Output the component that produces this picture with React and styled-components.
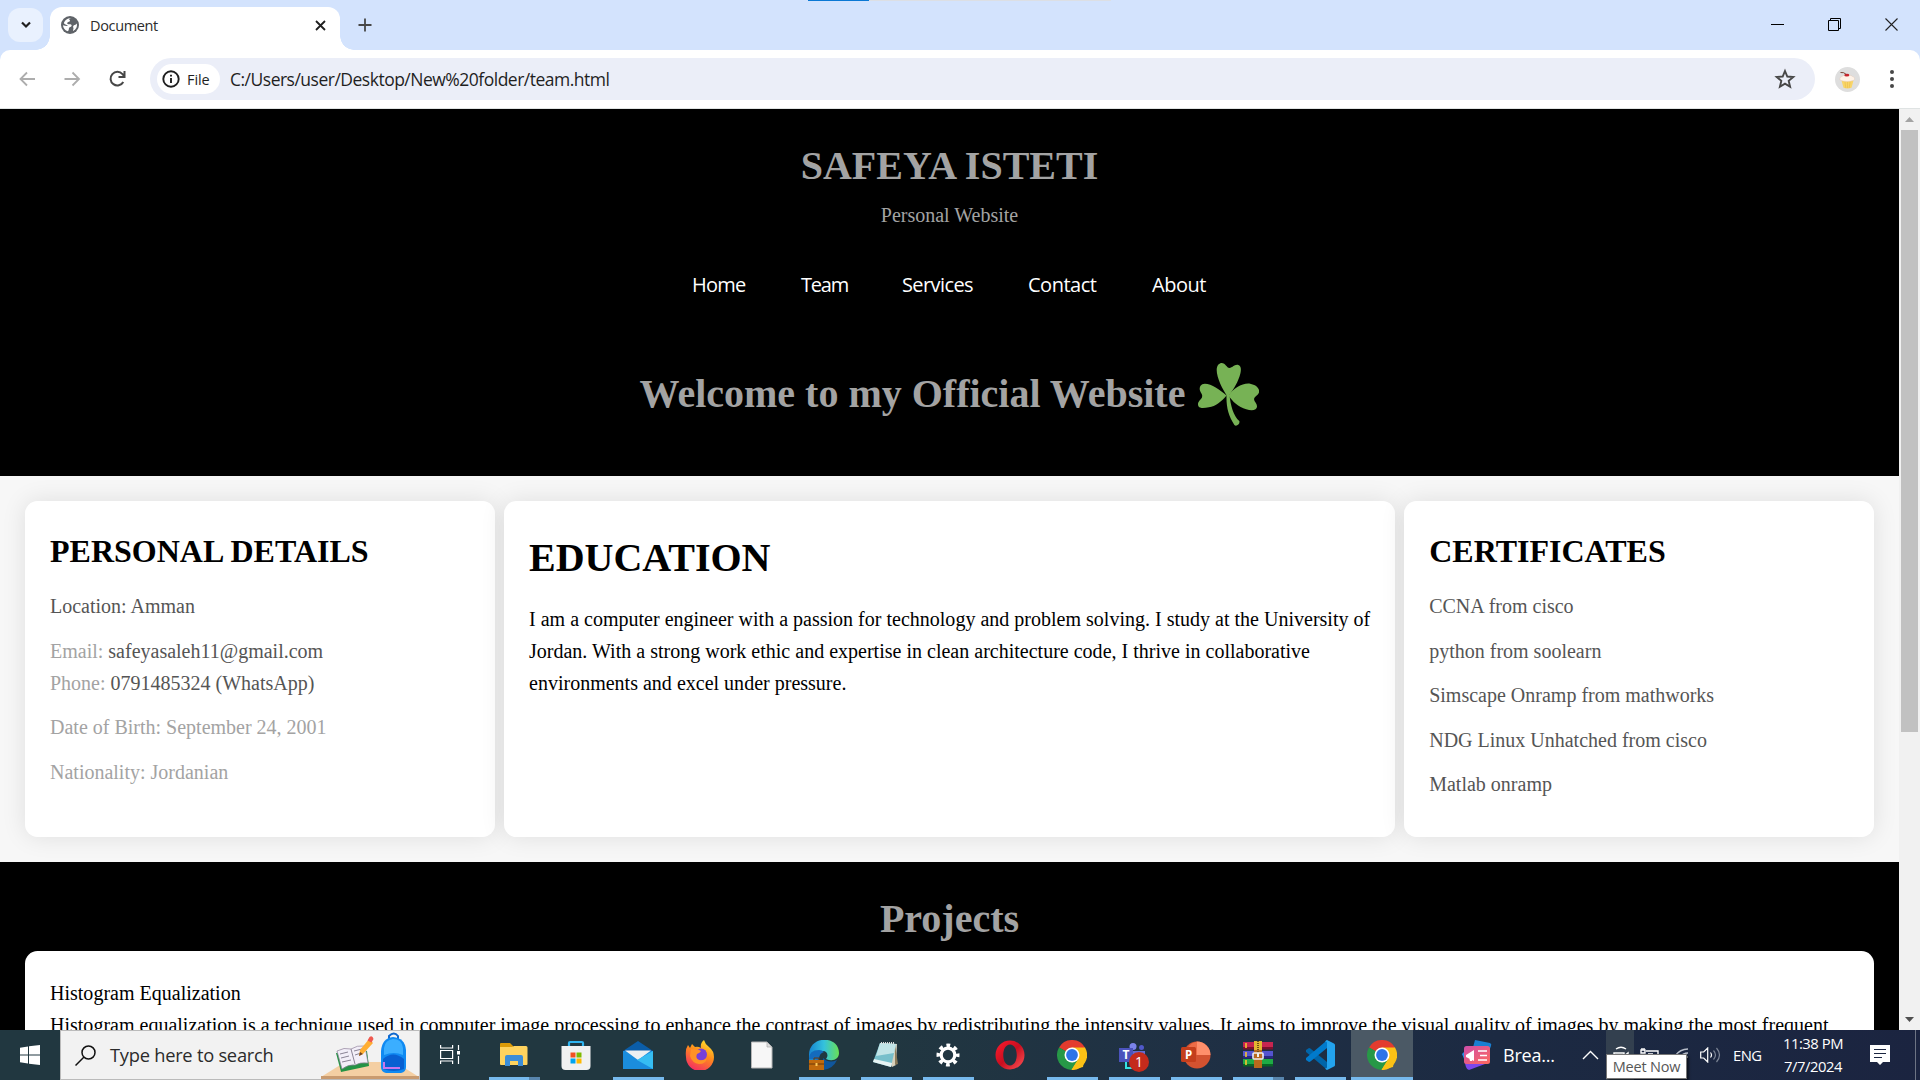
import React from 'react';
import styled, { createGlobalStyle } from 'styled-components';

const Global = createGlobalStyle`
  * { box-sizing: border-box; }
  html, body { margin: 0; padding: 0; overflow: hidden; background: #000; }
  svg { display: block; flex: none; }
`;

const ui = `"Open Sans", "Noto Sans", sans-serif`;
const serif = `"Liberation Serif", "Times New Roman", serif`;

const Screen = styled.div`
  width: 1920px;
  height: 1080px;
  display: flex;
  flex-direction: column;
  overflow: hidden;
  position: relative;
  font-family: ${ui};
`;

/* ---------- browser chrome ---------- */
const LoadStrip = styled.div`
  position: absolute;
  top: 0;
  left: 808px;
  width: 303px;
  height: 1px;
  background: linear-gradient(90deg, #0a78d4 61px, #dcdfe4 61px);
`;
const TabStrip = styled.div`
  height: 50px;
  flex: none;
  background: #d3e3fd;
  display: flex;
  align-items: flex-start;
  padding: 7px 0 0 8px;
`;
const TabSearch = styled.div`
  width: 35px;
  height: 34px;
  margin: 1px 7px 0 0;
  border-radius: 12px;
  background: #e9f1fe;
  display: flex;
  align-items: center;
  justify-content: center;
`;
const Tab = styled.div`
  position: relative;
  width: 290px;
  height: 43px;
  background: #fff;
  border-radius: 12px 12px 0 0;
  display: flex;
  align-items: center;
  padding: 0 13px 7px 11px;
  &::before, &::after {
    content: '';
    position: absolute;
    bottom: 0;
    width: 14px;
    height: 14px;
  }
  &::before { left: -14px; background: radial-gradient(circle at 0 0, transparent 13.5px, #fff 14px); }
  &::after { right: -14px; background: radial-gradient(circle at 100% 0, transparent 13.5px, #fff 14px); }
`;
const TabTitle = styled.span`
  flex: 1;
  margin-left: 11px;
  font-size: 14.5px;
  letter-spacing: -0.35px;
  color: #2c2c2c;
`;
const NewTab = styled.div`
  margin: 11px 0 0 18px;
`;
const WindowButtons = styled.div`
  margin-left: auto;
  display: flex;
  padding: 11px 22px 0 0;
  gap: 44px;
`;
const Toolbar = styled.div`
  height: 59px;
  background: #fff;
  border-bottom: 1px solid #dfe3e3;
  border-radius: 10px 10px 0 0;
  display: flex;
  align-items: center;
  padding: 0 17px;
`;
const ToolbarBack = styled.div`
  background: #d3e3fd;
  flex: none;
`;
const NavIcons = styled.div`
  display: flex;
  gap: 25px;
  width: 133px;
`;
const Omnibox = styled.div`
  width: 1665px;
  height: 42px;
  border-radius: 21px;
  background: #ebeef8;
  display: flex;
  align-items: center;
  padding: 0 19px 0 7px;
`;
const FileChip = styled.div`
  width: 63px;
  height: 30px;
  border-radius: 15px;
  background: #fff;
  display: flex;
  align-items: center;
  gap: 7px;
  padding-left: 5px;
  font-size: 14.5px;
  color: #1f1f1f;
  letter-spacing: -0.1px;
`;
const Url = styled.span`
  flex: 1;
  margin-left: 10px;
  font-size: 17.5px;
  letter-spacing: -0.5px;
  color: #1f1f1f;
`;
const Avatar = styled.div`
  width: 25px;
  height: 25px;
  border-radius: 50%;
  background: #dedede;
  margin: 0 30px 0 20px;
`;

/* ---------- web page ---------- */
const Viewport = styled.div`
  height: 921px;
  flex: none;
  display: flex;
`;
const Page = styled.div`
  width: 1899px;
  height: 921px;
  overflow: hidden;
  background: #f7f7f7;
  font: 20px/32px ${serif};
  color: #000;
`;
const Header = styled.header`
  height: 367px;
  background: #000;
  color: #a3a3a3;
  padding-top: 25px;
  display: flex;
  flex-direction: column;
  align-items: center;
`;
const Heading = styled.h1`
  margin: 0;
  font-size: ${(p) => p.$size || 40}px;
  line-height: 1.6;
  font-weight: 700;
`;
const Tagline = styled.p`
  margin: 1px 0 38px;
`;
const Menu = styled.nav`
  display: flex;
  gap: 55px;
  margin-bottom: 61px;
`;
const MenuLink = styled.a`
  width: ${(p) => p.$w}px;
  font: 20px/32px ${ui};
  letter-spacing: ${(p) => p.$track}px;
  white-space: nowrap;
  color: #fff;
`;
const Welcome = styled.div`
  display: flex;
  align-items: center;
  gap: 13px;
`;
const Main = styled.main`
  height: 386px;
  padding: 25px;
  display: flex;
  gap: 9px;
`;
const Card = styled.section`
  flex: ${(p) => p.$w ? `0 0 ${p.$w}px` : '1'};
  background: #fff;
  border-radius: 12.5px;
  padding: 25px;
  box-shadow: 0 0 25px rgba(0, 0, 0, 0.1);
  h1 { margin-bottom: 13.3px; }
`;
const Line = styled.p`
  margin: 0 0 ${(p) => (p.$tight ? 0 : 12.5)}px;
  color: ${(p) => (p.$muted ? '#a3a3a3' : '#555')};
  white-space: nowrap;
`;
const Value = styled.span`
  color: #555;
`;
const Body = styled.p`
  margin: 0;
  white-space: pre;
  letter-spacing: 0.008px;
`;
const Projects = styled.section`
  background: #000;
  padding: 25px 25px 0;
  h1 { text-align: center; color: #a3a3a3; }
`;
const ProjectCard = styled.div`
  background: #fff;
  height: 200px;
  border-radius: 12.5px;
  padding: 26px 25px;
`;
const Scrollbar = styled.div`
  width: 21px;
  background: #f1f1f1;
  display: flex;
  flex-direction: column;
  align-items: center;
`;
const ScrollArrow = styled.div`
  height: 21px;
  display: flex;
  align-items: center;
  margin-top: ${(p) => (p.$end ? 'auto' : 0)};
`;
const Thumb = styled.div`
  width: 17px;
  height: 602px;
  background: #c1c1c1;
`;

/* ---------- taskbar ---------- */
const Taskbar = styled.div`
  height: 50px;
  flex: none;
  display: flex;
  background: linear-gradient(90deg, #213740 0, #213740 45%, #1f3044 62%, #1c2a42 78%, #1b2440 100%);
  color: #fff;
  > * { flex: none; }
`;
const Start = styled.div`
  width: 60px;
  padding: 15px 0 0 20px;
`;
const Search = styled.div`
  width: 360px;
  height: 50px;
  background: #f2f2f2;
  border: 1px solid #bbb;
  display: flex;
  align-items: center;
  padding-left: 14px;
  color: #2b2b2b;
  font-size: 18.3px;
  white-space: nowrap;
`;
const SearchLabel = styled.span`
  margin-left: 14px;
  width: 211px;
  padding-bottom: 2px;
  letter-spacing: -0.25px;
`;
const TaskView = styled.div`
  width: 63px;
  padding: 15px 0 0 20px;
`;
const AppButton = styled.div`
  width: 62px;
  height: 50px;
  display: flex;
  flex-direction: column;
  align-items: center;
  justify-content: space-between;
  padding-top: 10px;
  background: ${(p) => (p.$active ? '#4b5965' : 'transparent')};
`;
const Indicator = styled.div`
  height: 3px;
  width: ${(p) => (p.$active ? 62 : 51)}px;
  background: ${(p) => p.$stack ? 'linear-gradient(90deg, #76b9ed 40px, #5885ad 40px)' : p.$on ? '#76b9ed' : 'transparent'};
`;
const News = styled.div`
  display: flex;
  align-items: center;
  gap: 11px;
  margin-left: 49px;
  width: 107px;
  font-size: 18px;
  letter-spacing: -0.2px;
`;
const Tray = styled.div`
  display: flex;
  align-items: center;
  position: relative;
  width: 153px;
  margin-left: 11px;
`;
const TrayCell = styled.div`
  flex: none;
  width: ${(p) => p.$w}px;
  height: 50px;
  display: flex;
  align-items: center;
  padding-left: ${(p) => p.$pad}px;
  background: ${(p) => (p.$hover ? '#33404f' : 'transparent')};
`;
const Tooltip = styled.div`
  position: absolute;
  left: 26px;
  top: 24px;
  width: 81px;
  height: 25px;
  background: #fff;
  border: 1px solid #767676;
  color: #575757;
  font-size: 14.5px;
  line-height: 23px;
  letter-spacing: -0.2px;
  text-align: center;
  white-space: nowrap;
  box-shadow: 2px 2px 2px rgba(0, 0, 0, 0.5);
`;
const Language = styled.div`
  width: 30px;
  font-size: 14.8px;
  line-height: 50px;
  letter-spacing: -0.5px;
`;
const Clock = styled.div`
  width: 100px;
  text-align: center;
  font-size: 14.8px;
  line-height: 23px;
  padding-top: 2px;
  letter-spacing: -0.45px;
  white-space: nowrap;
`;
const Notice = styled.div`
  width: 47px;
  margin-left: 6px;
  padding: 15px 0 0 1px;
  border-right: 1px solid #6d7484;
`;

/* ---------- drawings ---------- */
const Stroke = ({ w = 20, h = w, d, color = '#474747', sw = 2 }) => (
  <svg width={w} height={h} viewBox={`0 0 ${w} ${h}`} fill="none" stroke={color} strokeWidth={sw}><path d={d} /></svg>
);

const Globe = () => (
  <svg width="18" height="18" viewBox="0 0 18 18">
    <circle cx="9" cy="9" r="9" fill="#5f6368" />
    <path d="M10.500 2C8 2.300 7.600 3.800 9 4.500c.5 1.500-2.600 1-2.800 2.700-.1 1.300 1.800.9 3 1 1.500.2 2 1.600.9 2.400-1 .7-2 .6-2.200 2-.1 1-.2 2.600-1.300 2.600C3.800 14 2 11.800 2 9.200c1.600.3 3 .9 4.800.7-.3-1-2.800-1.200-3.900-2.700C3.500 5 6 2 10.500 2z" fill="#fff" />
    <path d="M15.800 7.500c.7 3.200-.9 6.200-3.600 7.400-.6-.8.400-1.600.300-2.600-.1-.8-.7-1.500-.2-2.400.7-1.100 2.300-.8 3.500-2.400z" fill="#fff" />
  </svg>
);

const Cupcake = () => (
  <svg width="25" height="25" viewBox="0 0 25 25">
    <path d="M6.500 13.500h12l-2 7.300q-4 1.500-8 0z" fill="#f8d568" />
    <path d="M10 15l.8 6M12.500 15v6M15 15l-.8 6" stroke="#eec152" strokeWidth=".8" />
    <path d="M5 13c-.6-2 .8-3.400 2-3.500 1.500-2 8.500-2.300 10.500 0 2 .2 2.800 2.800 1.200 3.800-3.500 1.600-10 1.600-13.700-.3z" fill="#fff3e8" stroke="#e3c9b8" strokeWidth=".5" />
    <ellipse cx="11.800" cy="8.200" rx="2.500" ry="1.400" fill="#c8232c" />
    <path d="M11 7.300Q9 5 5.500 5.500" stroke="#7b4a39" fill="none" />
  </svg>
);

const Shamrock = () => (
  <svg width="61" height="63" viewBox="0 0 62 64" fill="#77b255">
    <path d="M30 34C25 27 19 15 19 7c0-5 3-7 5-7 4 0 5 5 8 5s5-4 9-3c3 1 3 5 2 9-2 8-7 16-10 20z" />
    <path d="M29 33C22 27 14 21 7 21c-4 0-6 3-5 7 1 3 3 4 2 7-1 2-4 4-4 7 0 5 6 4 11 3 7-1 13-6 18-12z" />
    <path d="M31 33c5-7 14-13 22-12 6 1 10 5 9 9-1 3-5 4-5 7 0 2 3 4 3 7 0 4-5 5-11 3-8-2-14-8-18-14z" />
    <path d="M29 32c-.5 13 2 22 8 31 2 2 6-1 5-4-6-5-9-16-10-27z" />
  </svg>
);

const Desk = () => (
  <svg width="98" height="48" viewBox="0 0 98 48">
    <path d="M0 46L24 31h50l24 15z" fill="#f4cfa3" />
    <path d="M0 45h98v4H0z" fill="#c99b70" />
    <path d="M15 22l5 19 28-6-2-15z" fill="#249345" />
    <path d="M16 20q7-4 14-2 6-4 14-3l3 17q-8-1-13 2-6-1-13 4z" fill="#f2eef8" stroke="#8f8199" strokeWidth=".7" />
    <path d="M30 18l4 15M19 23l8-2M20 27l8-2M21 31l9-2M33 20l8-2M34 24l6-2" stroke="#8b8496" strokeWidth="1" />
    <path d="M38 25l1-6L48 8l4 4-10 11z" fill="#ffae33" />
    <path d="M46.500 9.500l2-3.500q3-2 4 2l-2 3.500z" fill="#ef594f" />
    <path d="M38 25l1-4 3 2z" fill="#704426" />
    <path d="M68 8V5q5-5 9 0v3" fill="none" stroke="#1068ce" strokeWidth="2" />
    <path d="M60 20Q61 7 72 6q12 1 13 13v17q0 5-5 6H65q-5-1-5-6z" fill="#108af2" />
    <path d="M63 17Q64 9 72 8q9 0 10 9v7q-9-4-19 0z" fill="#3baeff" />
    <path d="M62 28q10-9 21 0v10q-10 4-21 0z" fill="#0860d2" />
    <path d="M63 31v6h16" fill="none" stroke="#c777ec" strokeWidth="2" />
  </svg>
);

const icon = (children) => <svg width="30" height="30" viewBox="0 0 30 30">{children}</svg>;

const Explorer = () => icon(<>
  <path d="M1 4q0-1 1-1h9l3 3v5H1z" fill="#dc9b08" />
  <path d="M1 7h12l2-1h12q1.500 0 1.500 1.500V24q0 1-1 1H2q-1 0-1-1z" fill="#ffd35e" />
  <path d="M6 26V17q0-2 2-2h14q2 0 2 2v9h-5v-5h-8v5z" fill="#3c8dd7" />
</>);
const Store = () => icon(<>
  <path d="M8 7V3q0-1 1-1h12q1 0 1 1v4" fill="none" stroke="#2fb4f0" strokeWidth="2.200" />
  <path d="M.500 6h29v20q0 4-4 4h-21q-4 0-4-4z" fill="#f1f1f1" />
  <path d="M9.500 12.500h5v5h-5z" fill="#f25022" /><path d="M15.500 12.500h5v5h-5z" fill="#7fba00" />
  <path d="M9.500 18.500h5v5h-5z" fill="#00a4ef" /><path d="M15.500 18.500h5v5h-5z" fill="#ffb900" />
</>);
const Mail = () => icon(<>
  <path d="M0 11L15 1l15 10z" fill="#0b5da8" />
  <path d="M0 11h30v18H0z" fill="#1b8ddd" />
  <path d="M2 10.500h26L15 20z" fill="#edf0f2" />
  <path d="M30 11v18L14 20z" fill="#36bdf2" />
</>);
const Firefox = () => icon(<>
  <defs><linearGradient id="ff" x1=".8" y1="0" x2=".3" y2="1"><stop stopColor="#ffe52c" /><stop offset=".45" stopColor="#ff8b1c" /><stop offset="1" stopColor="#f42b65" /></linearGradient></defs>
  <path d="M3 5l2 3 2-4 3 3q3-1 6 1-1-5 3-8 1 4 5 7 5 4 5 10A14 14 0 0 1 1 17Q0 9 3 5z" fill="url(#ff)" />
  <circle cx="16" cy="14.500" r="6" fill="#7740d8" />
  <path d="M6 9q6-1 10 2-1 2-4 3-2 4 2 6 5 1 8-2-1 6-8 6-7-1-9-8z" fill="#ff9226" />
</>);
const BlankFile = () => icon(<>
  <path d="M4.500 2H20l5 5v21H4.500z" fill="#f7f7f7" stroke="#b5b5b5" /><path d="M20 2v5h5z" fill="#ddd" stroke="#aaa" strokeWidth=".7" />
</>);
const Edge = () => icon(<>
  <defs><linearGradient id="ed" x1="0" y1=".3" x2="1" y2=".3"><stop stopColor="#1685d1" /><stop offset=".5" stopColor="#34c2dd" /><stop offset="1" stopColor="#69df55" /></linearGradient></defs>
  <path d="M0 15C0-5 30-5 30 13c0 6-6 9-13 6 3-4 1-8-3-8-5 0-6 5-5 10H0z" fill="url(#ed)" />
  <path d="M0 19q0-9 10-9 3 0 5 2-5 1-5 8z" fill="#146bbd" />
  <path d="M14 18q6 6 14 2-4 9-14 10z" fill="#10569c" />
  <path d="M0 20h15v10H0z" fill="#c16a0d" /><path d="M5 20v-2h5v2M0 24h15" fill="none" stroke="#6b3a0d" /><path d="M6.500 23h2v3h-2z" fill="#ffc857" />
</>);
const Notepad = () => icon(<>
  <path d="M10 3l16 1-1 21-4 2z" fill="#d6d0bc" /><path d="M24 5l3 19-3 1z" fill="#8a7b5a" />
  <path d="M9 3l16 1-5 23L2 22z" fill="#77bfcb" /><path d="M9 3l16 1-2 9-18 3z" fill="#c1e4e7" /><path d="M2 22l18 5 1-4L3 19z" fill="#e7f3f3" />
  <path d="M10 3h14" stroke="#ddd" strokeWidth="2" strokeDasharray="1 1" />
</>);
const Gear = () => icon(<>
  <circle cx="15" cy="15" r="9.500" fill="none" stroke="#fff" strokeWidth="4" strokeDasharray="3.700 3.761" strokeDashoffset="1.850" />
  <circle cx="15" cy="15" r="6.800" fill="none" stroke="#fff" strokeWidth="3.200" />
</>);
const Opera = () => icon(<>
  <defs><linearGradient id="op" x1="0" y1="0" x2="1" y2="1"><stop stopColor="#ff1b2d" /><stop offset=".5" stopColor="#c80f20" /><stop offset="1" stopColor="#ff5557" /></linearGradient></defs>
  <path fillRule="evenodd" d="M15 .500A14.500 14.500 0 1 1 15 29.500 14.500 14.500 0 1 1 15 .500zm0 4c-9 0-9 21 0 21s9-21 0-21z" fill="url(#op)" />
</>);
const Chrome = () => icon(<>
  <path d="M15 15L2 7.500A15 15 0 0 1 28 7.500z" fill="#e33b2e" />
  <path d="M15 15L28 7.500A15 15 0 0 1 14.500 30z" fill="#fbc116" />
  <path d="M15 15l-.5 15A15 15 0 0 1 2 7.500z" fill="#279847" />
  <path d="M15 7.500h13L22 20z" fill="#fbc116" /><path d="M2 7.500L8.500 19 15 15z" fill="#279847" /><path d="M8.500 18.700L15 22.500l6.500-3.700L14.500 30z" fill="#279847" /><path d="M21.500 18.700L14.500 30 26 27l2-12z" fill="#fbc116" />
  <circle cx="15" cy="15" r="7.500" fill="#fff" /><circle cx="15" cy="15" r="5.900" fill="#2d74e8" />
</>);
const IconText = styled.text`
  font-family: ${ui};
  font-weight: ${(p) => p.$weight || 700};
  fill: #fff;
  text-anchor: middle;
`;
const Teams = () => (
  <svg width="30" height="32" viewBox="0 0 30 32" overflow="visible">
    <circle cx="14" cy="6.500" r="3.500" fill="#7b83eb" /><circle cx="22.500" cy="7.500" r="2.500" fill="#5059c9" />
    <path d="M8 11h18v10q-3 8-14 5z" fill="#636bd2" />
    <path d="M7 22v6h6" fill="none" stroke="#35e3e3" strokeWidth="2" />
    <path d="M0 8h14v14H0z" fill="#4b53bc" /><IconText x="7" y="19" fontSize="12">T</IconText>
    <circle cx="20" cy="22" r="10" fill="#c42b1c" /><IconText x="20" y="27" fontSize="14" $weight={400}>1</IconText>
  </svg>
);
const PowerPoint = () => icon(<>
  <circle cx="16" cy="15" r="13.500" fill="#d35230" /><path d="M16 1.500A13.500 13.500 0 0 1 29.500 15H16z" fill="#ff8f6b" /><path d="M16 1.500V15H5Q5 4 16 1.500z" fill="#ed6c47" />
  <rect x="0" y="7" width="15" height="15" rx="1.500" fill="#c43e1c" /><IconText x="7.500" y="18.800" fontSize="11.500">P</IconText>
</>);
const WinRar = () => icon(<>
  {[['#c62550', '#7a102d', 2], ['#5454d0', '#292982', 11], ['#1faa45', '#086326', 19]].map(([a, b, y]) => (
    <g key={y}><path d={`M0 ${y}h30v7H0z`} fill={a} /><path d={`M0 ${y + 5}h30v2.500H0z`} fill={b} /><path d={`M3 ${y + 1}v5`} stroke="#f6c531" strokeWidth="1.600" /></g>
  ))}
  <path d="M11 1h8v27h-8z" fill="#b9691d" /><path d="M11 1h8v9h-8z" fill="#e2b731" /><path d="M15 1v13" stroke="#715018" strokeDasharray="1 1" strokeWidth="2" />
  <rect x="10" y="13" width="10" height="6" rx="1" fill="none" stroke="#eee" strokeWidth="1.600" /><path d="M15 13v4" stroke="#eee" strokeWidth="2" />
</>);
const VsCode = () => icon(<>
  <path d="M1 10l3-2q1 0 2 1l16 13v7q-1 0-2-1L1 12z" fill="#0065a9" />
  <path d="M1 20l3 2q1 0 2-1L22 8V1q-1 0-2 1L1 18z" fill="#007acc" />
  <path d="M22 0l7 3.500q1 .500 1 1.500v20q0 1-1 1.500L22 30q-1 0-2-2 2 1 2-1V3q0-2-2-1 1-2 2-2z" fill="#23a3ee" />
</>);
const NewsIcon = () => icon(<>
  <path d="M13 0l15 3q2 1 1 3l-5 13-14-8z" fill="#197fd2" />
  <path d="M2 20h23l-2 4-16 6q-2 0-3-3z" fill="#7b47ed" /><path d="M0 14l3-3v10z" fill="#2391ed" />
  <defs><linearGradient id="nw" x1="0" y1="0" x2="1" y2="1"><stop stopColor="#ce4eaa" /><stop offset="1" stopColor="#ff695c" /></linearGradient></defs>
  <rect x="2" y="6" width="26" height="18" rx="2.500" fill="url(#nw)" />
  <path d="M4 15l8-5v11l-8-4zM7 17h3v4H8z" fill="#fff" /><path d="M16 11h9M18 15.500h7M16 20h9" stroke="#fff" strokeWidth="1.500" />
</>);

const apps = [
  { Icon: Explorer, on: true, stack: true }, { Icon: Store }, { Icon: Mail, on: true }, { Icon: Firefox },
  { Icon: BlankFile }, { Icon: Edge, on: true }, { Icon: Notepad, on: true }, { Icon: Gear, on: true },
  { Icon: Opera }, { Icon: Chrome, on: true }, { Icon: Teams, on: true }, { Icon: PowerPoint, on: true },
  { Icon: WinRar, on: true, stack: true }, { Icon: VsCode, on: true }, { Icon: Chrome, on: true, active: true },
];
const menu = [['Home', 54, -0.8], ['Team', 46, -1.2], ['Services', 71, -0.6], ['Contact', 69, -0.5], ['About', 55, -0.5]];
const certificates = ['CCNA from cisco', 'python from soolearn', 'Simscape Onramp from mathworks', 'NDG Linux Unhatched from cisco', 'Matlab onramp'];

export default function App() {
  return (
    <Screen>
      <Global />
      <TabStrip>
        <TabSearch><Stroke w={12} h={8} d="M2 1.500l4 4 4-4" color="#1f1f1f" sw={2.200} /></TabSearch>
        <Tab>
          <Globe />
          <TabTitle>Document</TabTitle>
          <Stroke w={13} d="M2 2l9 9M11 2l-9 9" color="#1f1f1f" sw={1.800} />
        </Tab>
        <NewTab><Stroke w={14} d="M7 .500v13M.500 7h13" sw={1.800} /></NewTab>
        <WindowButtons>
          <Stroke w={13} d="M0 6.500h13" color="#000" sw={1} />
          <Stroke w={13} d="M.500 2.500h10v10H.500zM2.500 2.500v-2h10v10h-2" color="#000" sw={1} />
          <Stroke w={13} d="M.500.500l12 12M12.500.500l-12 12" color="#222" sw={1.100} />
        </WindowButtons>
      </TabStrip>
      <LoadStrip />
      <ToolbarBack>
        <Toolbar>
          <NavIcons>
            <Stroke w={20} d="M18 10H4M10 3.500L3.500 10l6.500 6.500" color="#adadad" sw={1.800} />
            <Stroke w={20} d="M2.500 10h14M10.500 3.500l6.500 6.500-6.500 6.500" color="#adadad" sw={1.800} />
            <Stroke w={20} d="M16.300 13A6.800 6.800 0 1 1 15.500 5.200L17.500 7.500M17.500 2v6h-6" sw={2} />
          </NavIcons>
          <Omnibox>
            <FileChip>
              <svg width="18" height="18" viewBox="0 0 18 18" fill="none" stroke="#1f1f1f" strokeWidth="1.900"><circle cx="9" cy="9" r="7.700" /><path d="M9 8v5M9 4.800v1.800" /></svg>
              File
            </FileChip>
            <Url>C:/Users/user/Desktop/New%20folder/team.html</Url>
            <svg width="22" height="22" viewBox="0 0 22 22"><path d="M11 3l2.300 5.500 6 .500-4.600 3.900 1.400 5.800-5.100-3.100-5.100 3.100 1.400-5.800L2.700 9l6-.500z" fill="none" stroke="#474747" strokeWidth="1.900" /></svg>
          </Omnibox>
          <Avatar><Cupcake /></Avatar>
          <svg width="4" height="20" viewBox="0 0 4 20" fill="#474747"><circle cx="2" cy="3" r="2" /><circle cx="2" cy="10" r="2" /><circle cx="2" cy="17" r="2" /></svg>
        </Toolbar>
      </ToolbarBack>

      <Viewport>
        <Page>
          <Header>
            <Heading>SAFEYA ISTETI</Heading>
            <Tagline>Personal Website</Tagline>
            <Menu>{menu.map(([label, w, track]) => <MenuLink key={label} $w={w} $track={track}>{label}</MenuLink>)}</Menu>
            <Welcome><Heading>Welcome to my Official Website</Heading><Shamrock /></Welcome>
          </Header>
          <Main>
            <Card $w={470}>
              <Heading $size={32}>PERSONAL DETAILS</Heading>
              <Line>Location: Amman</Line>
              <Line $tight $muted>Email: <Value>safeyasaleh11@gmail.com</Value></Line>
              <Line $muted>Phone: <Value>0791485324 (WhatsApp)</Value></Line>
              <Line $muted>Date of Birth: September 24, 2001</Line>
              <Line $muted>Nationality: Jordanian</Line>
            </Card>
            <Card>
              <Heading>EDUCATION</Heading>
              <Body>{'I am a computer engineer with a passion for technology and problem solving. I study at the University of\nJordan. With a strong work ethic and expertise in clean architecture code, I thrive in collaborative\nenvironments and excel under pressure.'}</Body>
            </Card>
            <Card $w={470}>
              <Heading $size={32}>CERTIFICATES</Heading>
              {certificates.map((c) => <Line key={c}>{c}</Line>)}
            </Card>
          </Main>
          <Projects>
            <Heading>Projects</Heading>
            <ProjectCard>
              <Body>{'Histogram Equalization\nHistogram equalization is a technique used in computer image processing to enhance the contrast of images by redistributing the intensity values. It aims to improve the visual quality of images by making the most frequent'}</Body>
            </ProjectCard>
          </Projects>
        </Page>
        <Scrollbar>
          <ScrollArrow><svg width="9" height="5" viewBox="0 0 9 5"><path d="M0 5l4.500-5L9 5z" fill="#a3a3a3" /></svg></ScrollArrow>
          <Thumb />
          <ScrollArrow $end><svg width="9" height="5" viewBox="0 0 9 5"><path d="M0 0l4.500 5L9 0z" fill="#505050" /></svg></ScrollArrow>
        </Scrollbar>
      </Viewport>

      <Taskbar>
        <Start>
          <svg width="20" height="20" viewBox="0 0 20 20" fill="#fff"><path d="M0 2.800L8 1.500V9.500H0zM9 1.300L20 0v9.500H9zM0 10.500h8v8L0 17.300zM9 10.500h11V20L9 18.700z" /></svg>
        </Start>
        <Search>
          <svg width="21" height="21" viewBox="0 0 21 21" fill="none" stroke="#111" strokeWidth="1.500"><circle cx="13.500" cy="7.500" r="6.500" /><path d="M9 12L.500 20.500" /></svg>
          <SearchLabel>Type here to search</SearchLabel>
          <Desk />
        </Search>
        <TaskView>
          <svg width="20" height="19" viewBox="0 0 20 19" fill="none" stroke="#fff" strokeWidth="1.200"><path d="M.600 0v3h12V0M.600 5.500h12v8H.600zM.600 19v-3h12v3M18.500 0v5M18.500 11v8" /><path d="M17 6h3v3.500h-3z" fill="#fff" stroke="none" /></svg>
        </TaskView>
        {apps.map(({ Icon, on, stack, active }, i) => (
          <AppButton key={i} $active={active}><Icon /><Indicator $on={on} $stack={stack} $active={active} /></AppButton>
        ))}
        <News><NewsIcon />Brea...</News>
        <Tray>
          <TrayCell $w={26} $pad={2}><Stroke w={17} h={10} d="M1 9l7.500-7.500L16 9" color="#fff" sw={1.400} /></TrayCell>
          <TrayCell $w={28} $pad={7} $hover><Stroke w={16} h={18} d="M3 3q5-3.500 10 0M1 7h10v9H3q-2 0-2-2zM11 10l4-3v8l-4-2" color="#fff" sw={1.400} /></TrayCell>
          <TrayCell $w={40} $pad={6}><Stroke w={19} h={14} d="M6 3h12v8H3V7M1 2h4v3H1zM2 0v2M4 0v2M8 6h5" color="#fff" sw={1.400} /></TrayCell>
          <TrayCell $w={25} $pad={0}><Stroke w={15} h={16} d="M1 9Q6 2 14 2M5 11q4-5 9-5M9 13q2-3 5-3" color="#b8bec9" sw={1.400} /></TrayCell>
          <TrayCell $w={34} $pad={1}>
            <svg width="21" height="16" viewBox="0 0 21 16" fill="none" stroke="#fff" strokeWidth="1.200"><path d="M.700 5h3l4-4v14l-4-4h-3zM10.500 5.500q2 2.500 0 5" /><path d="M13.500 3.500q4 4.500 0 9M16.500 1q6 7 0 14" stroke="#7b8494" /></svg>
          </TrayCell>
          <Tooltip>Meet Now</Tooltip>
        </Tray>
        <Language>ENG</Language>
        <Clock>11:38 PM<br />7/7/2024</Clock>
        <Notice>
          <svg width="20" height="20" viewBox="0 0 20 20"><path d="M0 0h20v17h-7l-3 3-3-3H0z" fill="#fff" /><path d="M4 4.500h12M4 8.500h12M4 12.500h8" stroke="#1b2540" strokeWidth="1.200" /></svg>
        </Notice>
      </Taskbar>
    </Screen>
  );
}
